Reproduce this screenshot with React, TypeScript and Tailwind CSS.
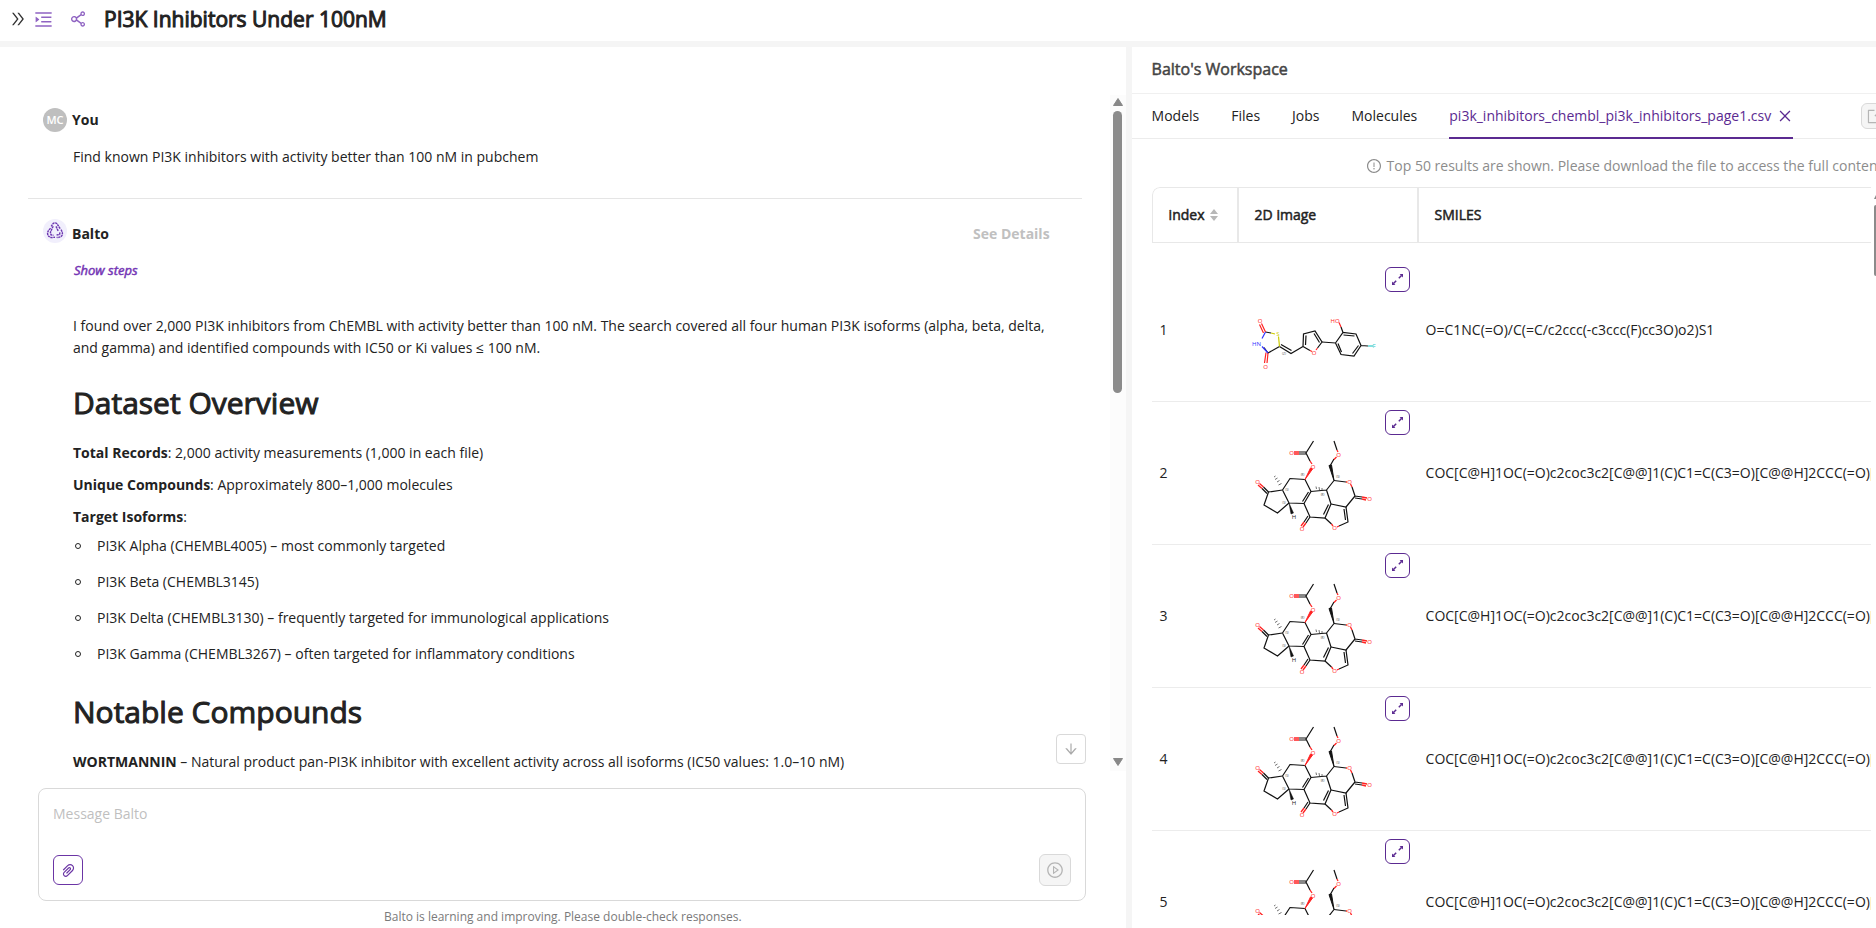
import React from "react";
import {
  AiOutlineDoubleRight,
  AiOutlineMenuUnfold,
  AiOutlineShareAlt,
  AiOutlineClose,
  AiOutlineExport,
  AiOutlineExclamationCircle,
  AiOutlinePaperClip,
  AiOutlineArrowDown,
  AiOutlinePlayCircle,
} from "react-icons/ai";

const isoforms = [
  "PI3K Alpha (CHEMBL4005) – most commonly targeted",
  "PI3K Beta (CHEMBL3145)",
  "PI3K Delta (CHEMBL3130) – frequently targeted for immunological applications",
  "PI3K Gamma (CHEMBL3267) – often targeted for inflammatory conditions",
];

const wortmannin =
  "COC[C@H]1OC(=O)c2coc3c2[C@@]1(C)C1=C(C3=O)[C@@H]2CCC(=O)[C@@]2(C)C[C@H]1OC(C)=O";

const rows = [
  { index: 1, smiles: "O=C1NC(=O)/C(=C/c2ccc(-c3ccc(F)cc3O)o2)S1" },
  { index: 2, smiles: wortmannin },
  { index: 3, smiles: wortmannin },
  { index: 4, smiles: wortmannin },
  { index: 5, smiles: wortmannin },
];

const tabs = ["Models", "Files", "Jobs", "Molecules"];

function BaltoLogo() {
  return (
    <svg viewBox="0 0 24 24" className="size-6 shrink-0" aria-hidden="true">
      <circle cx="12" cy="12" r="12" fill="#f1effc" />
      <g fill="none" stroke="#6b35b0" strokeWidth="1.4" strokeDasharray="2.2 0.6">
        <path d="M8.2 7.4 10 4.6Q12 3 14 4.8L17.4 10" />
        <path d="M7.6 9.2Q4.4 12 4.6 14.6 5 18 8.8 18.6L12 18.2" />
        <path d="M18 10.6Q20.2 14 19 16.4 17.6 18.8 13.6 18.4" />
        <path d="M10.2 7.2 9 9.6 7.4 13.4 8 15.8 10.5 16.4" />
        <path d="M13 7.4 15.2 12M13.6 16 16.6 15.4 17 13" />
      </g>
    </svg>
  );
}

function ExpandIcon() {
  return (
    <svg viewBox="0 0 13 13" className="size-[13px]" aria-hidden="true">
      <path d="M2.5 10.5 5.2 7.8M7.8 5.2 10.5 2.5" stroke="currentColor" strokeWidth="1.5" />
      <path d="M12 1V4.4L8.6 1ZM1 12V8.6L4.4 12Z" fill="currentColor" />
    </svg>
  );
}

function Rhodanine() {
  return (
    <svg viewBox="1238 265 140 130" className="h-[130px] w-[140px]" role="img" aria-label="Molecule structure">
      <g fill="none" stroke="#111" strokeWidth="1.2">
        <path d="M1264.5 332 1270 333M1278.5 346.5 1267 353 1263 347.5" />
        <path d="M1278.5 346.5 1290 353.5 1302 346.5M1280 344.5 1290.5 350.5" />
        <path d="M1302 346.5 1302.5 334 1314 331 1321 342 1316.5 348M1302 346.5 1309 350.5M1304.5 345 1305 335.5M1313 333.5 1318.5 342.5" />
        <path d="M1321 342 1334.5 343 1342 332.5 1355 334 1360 345.5 1353 356 1340 354.5 1334.5 343M1342.5 335 1353.5 336M1357.5 345.5 1351.5 353.5M1340.5 352 1337 343.5M1342 332.5 1340 327M1360 345.5 1367 346" />
      </g>
      <g fill="none" strokeWidth="1.2">
        <path d="M1264.5 332 1260.5 323.5M1262.5 333 1258.5 324.5M1267 353 1266 363M1265 352.5 1263.5 363M1316.5 348 1315 350M1309 350.5 1311 351.5M1340 327 1338 322.5" stroke="#f22" />
        <path d="M1264.5 332 1261 338.5M1267 353 1261 346.5" stroke="#33f" />
        <path d="M1270 333 1274 334M1278.5 346.5 1277.5 336.5" stroke="#cccc00" />
        <path d="M1367 346 1372 346" stroke="#3cc" />
      </g>
      <g fontSize="6" fontFamily="Open Sans, sans-serif" textAnchor="middle">
        <text x="1259" y="322.5" fill="#f22">O</text>
        <text x="1264.5" y="368.5" fill="#f22">O</text>
        <text x="1255.5" y="345.5" fill="#33f">HN</text>
        <text x="1277" y="336" fill="#cc0">S</text>
        <text x="1313" y="354.5" fill="#f22">O</text>
        <text x="1334" y="323" fill="#f22">HO</text>
        <text x="1373" y="348" fill="#3cc">F</text>
      </g>
      <text x="1283" y="355" fontSize="3.5" fontFamily="Open Sans, sans-serif" fill="#555" textAnchor="middle">(Z)</text>
    </svg>
  );
}

function Wortmannin() {
  return (
    <svg viewBox="0 0 140 110" className="h-[110px] w-[140px]" role="img" aria-label="Molecule structure">
      <g fill="none" stroke="#111" strokeWidth="1.2">
        <path d="M73.5 11 66 23 70 31M66 22 59 22M66 24 59 24" />
        <path d="M94 11 97 20M94 29 90 36" />
        <path d="M42.5 60 50 48.5 65 49.5 71 61.5 64 73.5 49 73 42.5 60M68.5 62 62.5 71.5" />
        <path d="M42.5 60 28.5 62 24 75 37.5 83 49 73M28.5 62 23.5 57M27 63.5 22 58.5" />
        <path d="M71 61.5 86.5 60 94 50.5M86.5 60 91 74 85 88 70 87 64 73.5M88.5 74.5 83.5 84.5" />
        <path d="M94 50.5 106 52M115 66 112 57M115 66 106 77 91 74M115 66 122 67M115 68 122 69" />
        <path d="M85 88 91.5 94M106 77 108 92 99 96M104 79 105.5 90M70 87 66 93M68 86 64 92" />
      </g>
      <g stroke="#f22" fill="none" strokeWidth="1.3">
        <path d="M59 22 54 22M59 24 54 24M70 31 72 34M97 20 98 22M96.5 27 94 29.5M23.5 57 19.5 53.5M22 58.5 18 55M106 52 107 52M112 57 110.5 54M122 67 127 68M122 69 126 70M91.5 94 93 96M99 96 97 97M66 93 63 97M64 92 61 96" />
      </g>
      <path d="M65 49.5 70.5 38 72.5 39Z" fill="#f22" stroke="#f22" />
      <path d="M94 50.5 89 35.5 91.5 35Z" fill="#111" stroke="#111" />
      <path d="M49 73 51 84 53.5 83Z" fill="#111" stroke="#111" strokeWidth="0.5" />
      <path d="M34 47 35.5 46M35 49.5 37.5 48M37 52 39.5 50.5M38.5 55 41.5 53.5M76 56.5 76.5 59M79 57 79.5 60M82 58 82 61" stroke="#333" strokeWidth="0.7" />
      <g fontSize="6" fontFamily="Open Sans, sans-serif" fill="#f22" textAnchor="middle">
        <text x="51.5" y="25">O</text>
        <text x="73" y="38.5">O</text>
        <text x="98.5" y="27">O</text>
        <text x="17.5" y="54">O</text>
        <text x="109.5" y="54">O</text>
        <text x="129.5" y="70.5">O</text>
        <text x="94.5" y="100">O</text>
        <text x="62" y="101">O</text>
        <text x="54" y="89" fill="#222">H</text>
      </g>
      <g fontSize="3" fontFamily="Open Sans, sans-serif" fill="#444" textAnchor="middle">
        <text x="62.5" y="46">(R)</text>
        <text x="98" y="47.5">(S)</text>
        <text x="47" y="61">(S)</text>
        <text x="44" y="74">(S)</text>
        <text x="82.5" y="66">(R)</text>
      </g>
    </svg>
  );
}

export default function App() {
  return (
    <div className="flex h-screen flex-col overflow-hidden bg-[#f5f5f5] font-['Open_Sans','Noto_Sans',sans-serif] text-sm text-[#222]">
      <header className="mb-1.5 flex h-[41px] shrink-0 items-center bg-white pr-4 pb-[3px] pl-[9px]">
        <button aria-label="Expand sidebar" className="mr-1.5 text-[#333]">
          <AiOutlineDoubleRight size={18} />
        </button>
        <button aria-label="Open chats" className="mr-[14px] text-[#8f63c2]">
          <AiOutlineMenuUnfold size={21} />
        </button>
        <button aria-label="Share" className="mr-4 text-[#8f63c2]">
          <AiOutlineShareAlt size={20} />
        </button>
        <h1 className="text-[21px] font-normal [-webkit-text-stroke:1px_currentColor]">PI3K Inhibitors Under 100nM</h1>
      </header>

      <div className="flex min-h-0 flex-1 gap-1.5">
        <main className="flex w-3/5 shrink-0 flex-col bg-white">
          <div className="mt-12 flex h-[676px] shrink-0">
            <div className="relative min-w-0 flex-1 overflow-hidden pt-[13px] pr-7 pl-7">
              <section className="border-b border-[#e5e5e5] pb-[30px] pl-[15px]">
                <div className="flex h-6 items-center gap-[5px]">
                  <span className="flex size-6 items-center justify-center rounded-full bg-[#bfbfbf] text-[11px] font-semibold text-white">MC</span>
                  <h2 className="font-bold">You</h2>
                </div>
                <p className="mt-[14px] pl-[30px] leading-[22px]">Find known PI3K inhibitors with activity better than 100 nM in pubchem</p>
              </section>

              <section className="pt-5 pr-8 pl-[15px]">
                <div className="flex h-6 items-start gap-[5px]">
                  <BaltoLogo />
                  <h2 className="mt-[5px] flex-1 font-bold">Balto</h2>
                  <button className="mt-[5px] font-bold text-[#c0c0c0]">See Details</button>
                </div>
                <div className="pl-[30px]">
                  <button className="mt-[18px] block pl-px text-[13px] leading-[18px] text-[#7536b5] italic [-webkit-text-stroke:0.5px_currentColor]">Show steps</button>
                  <p className="mt-9 leading-[22px]">
                    I found over 2,000 PI3K inhibitors from ChEMBL with activity better than 100 nM. The search covered all four human PI3K isoforms (alpha, beta, delta, and gamma) and identified compounds with IC50 or Ki values ≤ 100 nM.
                  </p>
                  <h3 className="mt-6 text-3xl leading-10 font-normal [-webkit-text-stroke:1px_currentColor]">Dataset Overview</h3>
                  <p className="mt-[19px] leading-[22px]"><b>Total Records</b>: 2,000 activity measurements (1,000 in each file)</p>
                  <p className="mt-2.5 leading-[22px]"><b>Unique Compounds</b>: Approximately 800–1,000 molecules</p>
                  <p className="mt-2.5 leading-[22px]"><b>Target Isoforms</b>:</p>
                  <ul className="mt-[7px] space-y-[14px]">
                    {isoforms.map((item) => (
                      <li key={item} className="flex items-center leading-[22px]">
                        <span className="mr-4 ml-[2px] size-1.5 rounded-full border border-[#222]" />
                        {item}
                      </li>
                    ))}
                  </ul>
                  <h3 className="mt-[27px] text-3xl leading-10 font-normal [-webkit-text-stroke:1px_currentColor]">Notable Compounds</h3>
                  <p className="mt-[19px] leading-[22px]"><b>WORTMANNIN</b> – Natural product pan-PI3K inhibitor with excellent activity across all isoforms (IC50 values: 1.0–10 nM)</p>
                </div>
              </section>
              <button aria-label="Scroll to bottom" className="absolute right-6 bottom-[7px] flex size-[30px] items-center justify-center rounded border border-[#d9d9d9] bg-white text-[#aaa]">
                <AiOutlineArrowDown size={16} />
              </button>
            </div>
            <div className="flex w-4 flex-col items-center bg-[#fcfcfc] pt-[3px] pb-[5px]" aria-hidden="true">
              <svg viewBox="0 0 10 8" className="h-2 w-2.5"><path d="M5 0.5 9.5 7.5H0.5Z" fill="#888" stroke="#888" strokeLinejoin="round" /></svg>
              <div className="mt-[5px] h-[282px] w-[9px] rounded-full bg-[#8b8b8b]" />
              <svg viewBox="0 0 10 8" className="mt-auto h-2 w-2.5"><path d="M5 7.5 9.5 0.5H0.5Z" fill="#888" stroke="#888" strokeLinejoin="round" /></svg>
            </div>
          </div>

          <form className="mt-[17px] mr-10 ml-[38px] flex h-[113px] shrink-0 flex-col justify-between rounded-lg border border-[#d9d9d9] p-[14px]" onSubmit={(e) => e.preventDefault()}>
            <textarea aria-label="Message Balto" placeholder="Message Balto" rows={1} className="h-[22px] w-full resize-none leading-[22px] outline-none placeholder:text-[#bfbfbf]" />
            <div className="flex items-center justify-between">
              <button type="button" aria-label="Attach file" className="flex size-[30px] items-center justify-center rounded-md border border-[#6b35a5] text-[#6b35a5]">
                <AiOutlinePaperClip size={17} />
              </button>
              <button type="submit" disabled aria-label="Send" className="flex size-8 items-center justify-center rounded-md border border-[#d9d9d9] bg-[#f5f5f5] text-[#b5b5b5]">
                <AiOutlinePlayCircle size={18} />
              </button>
            </div>
          </form>
          <p className="mt-[7px] text-center text-xs leading-[18px] text-[#7a7a7a]">Balto is learning and improving. Please double-check responses.</p>
        </main>

        <aside className="flex min-w-0 flex-1 flex-col bg-white">
          <h2 className="h-[47px] shrink-0 border-b border-[#f0f0f0] px-5 text-base leading-[45px] font-normal text-[#444] [-webkit-text-stroke:0.5px_currentColor]">Balto's Workspace</h2>
          <nav className="flex h-[45px] shrink-0 items-stretch gap-8 border-b border-[#ececec] pl-5">
            {tabs.map((tab) => (
              <button key={tab} className="shrink-0">{tab}</button>
            ))}
            <div className="-mb-px flex shrink-0 items-center gap-1.5 border-b-2 border-[#5b2a91] text-[#5b2a91]">
              <button>pi3k_inhibitors_chembl_pi3k_inhibitors_page1.csv</button>
              <button aria-label="Close tab"><AiOutlineClose size={16} /></button>
            </div>
            <button aria-label="Export" className="ml-9 flex size-[26px] shrink-0 items-center justify-center self-center rounded-md border border-[#d9d9d9] bg-[#f5f5f5] text-[#b5b5b5]">
              <AiOutlineExport size={17} />
            </button>
          </nav>
          <p className="mt-4 ml-[234px] flex items-center gap-[5px] leading-[22px] whitespace-nowrap text-[#8c8c8c]">
            <AiOutlineExclamationCircle size={16} className="shrink-0" />
            Top 50 results are shown. Please download the file to access the full content.
          </p>
          <div className="mt-[10px] mb-[13px] ml-5 flex min-h-0 flex-1">
            <div className="min-w-0 flex-1 overflow-hidden rounded-tl-lg">
              <table className="w-full table-fixed border-separate border-spacing-0 text-left">
                <thead>
                  <tr className="h-14">
                    <th className="w-[87px] rounded-tl-lg border border-r-2 border-[#e8e8e8] pl-4 font-normal [-webkit-text-stroke:0.5px_currentColor]">
                      <span className="flex items-center gap-1.5">
                        index
                        <svg viewBox="0 0 8 12" className="h-3 w-2" aria-hidden="true"><path d="M4 0 8 5H0ZM4 12 8 7H0Z" fill="#b8b8b8" /></svg>
                      </span>
                    </th>
                    <th className="w-[180px] border-y border-r-2 border-[#e8e8e8] pl-4 font-normal [-webkit-text-stroke:0.5px_currentColor]">2D image</th>
                    <th className="border-y border-[#e8e8e8] pl-4 font-normal [-webkit-text-stroke:0.5px_currentColor]">SMILES</th>
                  </tr>
                </thead>
                <tbody>
                  <tr className="h-4" aria-hidden="true"><td colSpan={3} /></tr>
                  {rows.map((row) => (
                    <tr key={row.index} className="h-[143px]">
                      <td className="border-b border-[#ececec] pl-2">{row.index}</td>
                      <td className="relative h-[143px] border-b border-[#ececec] p-0">
                        {row.index === 1 ? <Rhodanine /> : <div className="ml-px pt-6"><Wortmannin /></div>}
                        <button aria-label="Expand structure" className="absolute top-2 right-[9px] flex size-[25px] items-center justify-center rounded-md border border-[#5b2a91] text-[#5b2a91]">
                          <ExpandIcon />
                        </button>
                      </td>
                      <td className="overflow-hidden border-b border-[#ececec] pl-[7px] whitespace-nowrap">{row.smiles}</td>
                    </tr>
                  ))}
                </tbody>
              </table>
            </div>
            <div className="flex w-[5px] flex-col items-end pt-2" aria-hidden="true">
              <svg viewBox="0 0 2 4" className="h-1 w-0.5"><path d="M2 0V4H0Z" fill="#888" /></svg>
              <div className="mt-1.5 h-[71px] w-0.5 rounded-l bg-[#8b8b8b]" />
            </div>
          </div>
        </aside>
      </div>
    </div>
  );
}
